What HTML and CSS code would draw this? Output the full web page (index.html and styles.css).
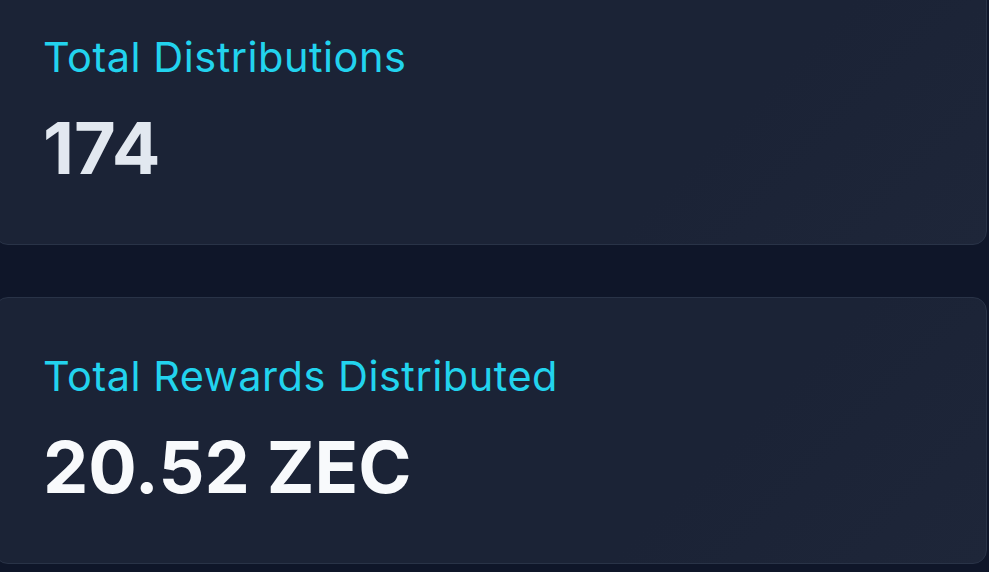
FILE: index.html
```html
<!DOCTYPE html>
<html lang="en">
<head>
<meta charset="utf-8">
<title>Stats</title>
<link rel="stylesheet" href="styles.css">
</head>
<body>
<main class="stats">
  <section class="card">
    <div class="card-label">Total Distributions</div>
    <div class="card-value card-value--muted">174</div>
  </section>
  <section class="card">
    <div class="card-label">Total Rewards Distributed</div>
    <div class="card-value">20.52 ZEC</div>
  </section>
</main>
</body>
</html>
```

FILE: styles.css
```css
html, body {
  margin: 0;
  padding: 0;
  background: #0f1629;
  overflow: hidden;
  height: 100%;
}

body {
  font-family: Inter, "Noto Sans", "Liberation Sans", sans-serif;
}

.stats {
  display: flex;
  flex-direction: column;
  gap: 52px;
  margin-top: -22px;
  margin-left: -6px;
  width: 993px;
}

.card {
  box-sizing: border-box;
  height: 267px;
  padding: 52.5px 48px 0 48px;
  border: 1.5px solid #293347;
  border-radius: 14px;
  background: linear-gradient(135deg, #1b2336 0%, #1b2336 70%, #1e2639 100%);
}

.card-label {
  font-size: 41.5px;
  line-height: 50px;
  font-weight: 400;
  letter-spacing: 0.5px;
  color: #22d3ee;
}

.card-value {
  margin-top: 30px;
  font-size: 72px;
  line-height: 72px;
  font-weight: 700;
  color: #f8fafc;
}

.card-value--muted {
  color: #e2e8f0;
}
```
